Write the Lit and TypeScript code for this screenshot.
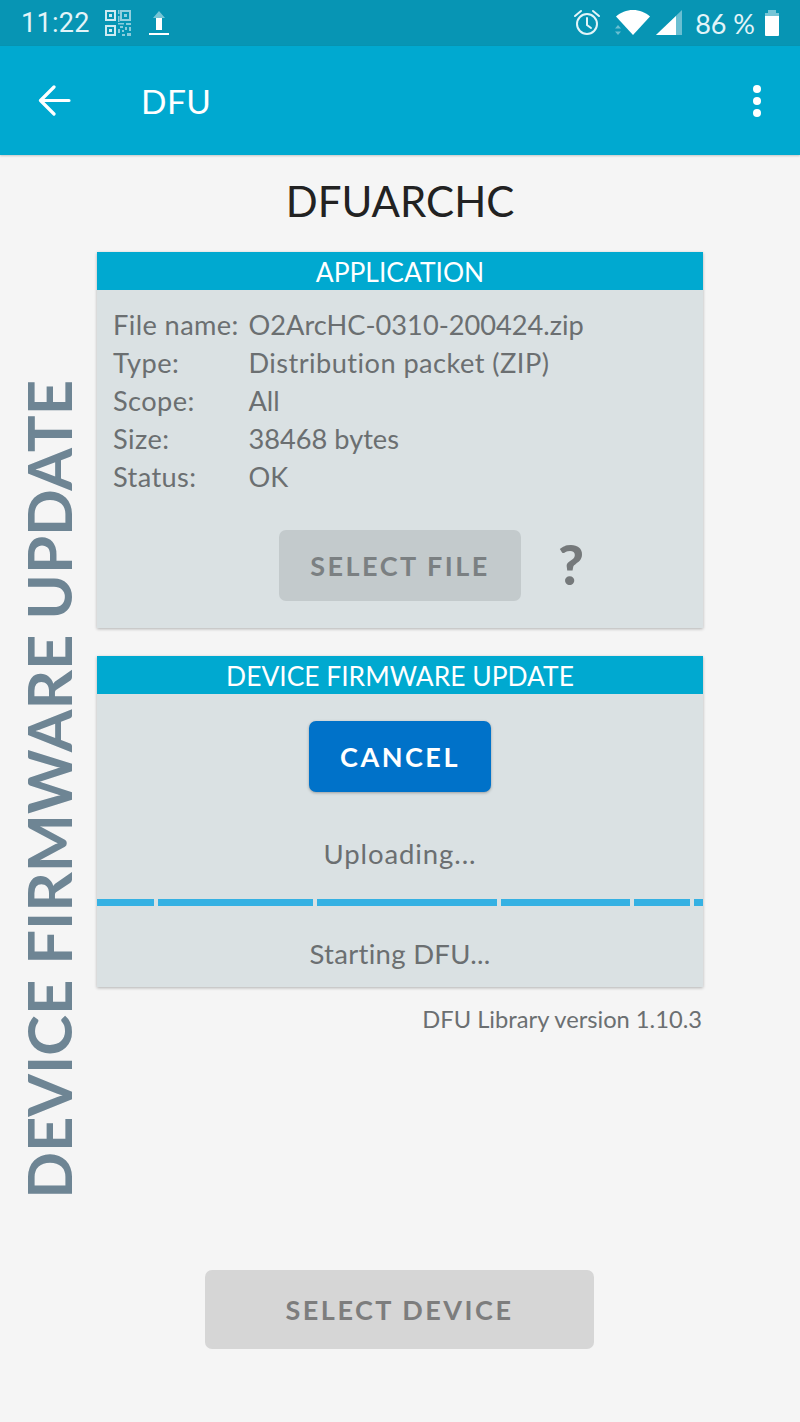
import { LitElement, html, css, svg } from "lit";
import { customElement } from "lit/decorators.js";

const qr = svg`<svg class="qr" width="28" height="28" viewBox="0 0 28 28" fill="#cfeaf1">
<path fill-rule="evenodd" d="M1 1h11v11H1zM3 3v7h7V3z"/><rect x="5" y="5" width="3" height="3"/>
<path fill-rule="evenodd" d="M1 16h11v11H1zM3 18v7h7v-7z"/><rect x="5" y="20" width="3" height="3"/>
<path opacity=".7" fill-rule="evenodd" d="M16 1h11v11H16zM18 3v7h7V3z"/><rect opacity=".7" x="20" y="5" width="3" height="3"/>
<path opacity=".65" d="M14 1h1.500v4H14zM14 7h1.500v6H14zM14 14h6v1.500h-6zM22 14h5v2h-5zM16 17h3v2h-3zM21 18h2v3h-2zM25 18h2v4h-2zM14 20h2v4h-2zM18 21h2v2h-2zM18 25h3v2h-3zM23 24h4v3h-4z"/>
</svg>`;
const upload = svg`<svg width="22" height="26" viewBox="0 0 22 26"><path d="M11 1l6 7h-3v3H8V8H5z" fill="#fff" opacity=".45"/><rect x="8" y="8" width="6" height="12" fill="#fff"/><rect x="1" y="23" width="20" height="2" fill="#fff"/></svg>`;
const alarm = svg`<svg width="28" height="28" viewBox="0 0 28 28" fill="none" stroke="#e3f4f8" stroke-width="2"><circle cx="14" cy="15" r="10"/><path d="M14 9v7l4 3M2 7l6-5M26 7l-6-5" stroke-linecap="round"/></svg>`;
const wifi = svg`<svg width="36" height="26" viewBox="0 0 36 26"><path d="M1 6.500C5.500 2.500 11.500 0 18 0s12.500 2.500 17 6.500L18 25z" fill="#fff"/></svg>`;
const arrows = svg`<svg class="arrows" width="6" height="10" viewBox="0 0 6 10" fill="#fff" opacity=".4"><path d="M3 0l3 3.500H0zM3 10L0 6.500h6z"/></svg>`;
const signal = svg`<svg width="26" height="26" viewBox="0 0 26 26"><path d="M0 25L26 0v25z" fill="#fff" opacity=".4"/><path d="M0 25L20 6v19z" fill="#fff"/></svg>`;
const battery = svg`<svg width="16" height="26" viewBox="0 0 16 26"><path d="M4 0h8v3H4z" fill="#fff" opacity=".45"/><path d="M1 3h14v3H1z" fill="#fff" opacity=".45"/><path d="M1 6h14v19a1 1 0 0 1-1 1H2a1 1 0 0 1-1-1z" fill="#fff"/></svg>`;
const back = svg`<svg width="34" height="32" viewBox="0 0 34 32" fill="none" stroke="#fff" stroke-width="3.200" stroke-linecap="round" stroke-linejoin="round"><path d="M31 15.500H3M16 2L2.500 15.500 16 29"/></svg>`;
const more = svg`<svg width="10" height="34" viewBox="0 0 10 34" fill="#fff"><circle cx="5" cy="5" r="4"/><circle cx="5" cy="17" r="4"/><circle cx="5" cy="29" r="4"/></svg>`;

@customElement("app-root")
export class AppRoot extends LitElement {
  static styles = css`
    :host { display: block; width: 800px; height: 1422px; background: #f5f5f5; font-family: Lato, "Noto Sans", sans-serif; font-variant-ligatures: none; color: #6b6f71; overflow: hidden; }
    .status { height: 46px; background: #0795b4; color: #e3f4f8; display: flex; align-items: center; padding: 0 20px 0 21px; box-sizing: border-box; }
    .time { font: 400 27px Roboto, sans-serif; letter-spacing: .3px; }
    .qr { margin-left: 14px; }
    .up { margin-left: 16px; display: flex; }
    .right { margin-left: auto; display: flex; align-items: center; }
    .right .w { margin-left: 14px; position: relative; display: flex; }
    .arrows { position: absolute; left: 0; top: 15px; }
    .right .s { margin-left: 5px; display: flex; }
    .pct { margin-left: 13px; font: 400 27px Lato, sans-serif; }
    .right .b { margin-left: 9px; display: flex; }
    .bar { height: 109px; background: #00a9d0; display: flex; align-items: center; padding: 0 38px; box-sizing: border-box; color: #fff; box-shadow: 0 1px 2px rgba(0,0,0,.2); position: relative; }
    .bar h1 { margin: 0 0 0 69px; font: 400 33.500px Lato, sans-serif; flex: 1; letter-spacing: .4px; }
    .main { display: grid; grid-template-columns: 97px 606px 97px; grid-template-rows: 97px 1fr; height: 1267px; }
    .title { grid-column: 1 / 4; grid-row: 1; margin: 0 0 6px; display: flex; align-items: center; justify-content: center; font: 400 42px Lato, sans-serif; color: #222; }
    .side { grid-column: 1; grid-row: 1 / 3; display: flex; justify-content: center; align-items: center; padding-top: 1px; }
    .side span { writing-mode: vertical-rl; transform: rotate(180deg); font: 700 61.500px Lato, sans-serif; color: #6e8594; white-space: nowrap; margin-right: 1px; }
    .col { grid-column: 2; grid-row: 2; display: flex; flex-direction: column; padding-bottom: 73px; }
    .card { background: #dae1e3; box-shadow: 0 1px 3px rgba(0,0,0,.28); }
    .card + .card { margin-top: 28px; }
    .head { background: #00a9d0; color: #fff; text-align: center; height: 38px; font: 400 26.400px/40px Lato, sans-serif; }
    .app { height: 376px; box-sizing: border-box; }
    .rows { padding: 15px 16px 0; display: grid; grid-template-columns: 135.500px 1fr; grid-auto-rows: 38px; align-items: center; font-size: 27.200px; }
    .rows .k { letter-spacing: .4px; }
    .rows .wide { letter-spacing: .45px; }
    .actions { display: flex; justify-content: center; margin-top: 35px; position: relative; }
    .btn { border-radius: 7px; font: 700 27px Lato, sans-serif; letter-spacing: 2.500px; display: flex; align-items: center; justify-content: center; }
    .sel { width: 242px; height: 71px; background: #c3cacc; color: #7b8082; }
    .q { position: absolute; left: 461px; top: 0; font: 900 56px Lato, sans-serif; color: #75797b; }
    .dfu { height: 331px; display: flex; flex-direction: column; align-items: center; }
    .head.wide { align-self: stretch; }
    .cancel { width: 182px; height: 71px; background: #0072c9; color: #fff; margin-top: 27px; box-shadow: 0 1px 3px rgba(0,0,0,.3); }
    .up-t { font-size: 27.500px; letter-spacing: .9px; margin-top: 43px; line-height: 38px; }
    .prog { align-self: stretch; display: flex; gap: 4px; height: 7px; margin-top: 26px; }
    .prog i { background: #35b1e3; display: block; }
    .start { font-size: 27.500px; letter-spacing: .3px; margin-top: 29px; line-height: 38px; }
    .ver { text-align: right; font-size: 23.700px; margin: 17px 1px 0 0; line-height: 30px; }
    .dev { width: 389px; height: 79px; background: #d6d6d6; color: #7d7d7d; margin-top: auto; margin-right: 1px; align-self: center; }
  `;

  render() {
    const segs = [57, 155, 180, 129, 56, 9];
    return html`
      <div class="status">
        <span class="time">11:22</span>
        ${qr}
        <span class="up">${upload}</span>
        <div class="right">
          ${alarm}
          <span class="w">${arrows}${wifi}</span>
          <span class="s">${signal}</span>
          <span class="pct">86 %</span>
          <span class="b">${battery}</span>
        </div>
      </div>
      <div class="bar">${back}<h1>DFU</h1>${more}</div>
      <div class="main">
        <h2 class="title">DFUARCHC</h2>
        <div class="side"><span>DEVICE FIRMWARE UPDATE</span></div>
        <div class="col">
          <section class="card app">
            <div class="head">APPLICATION</div>
            <div class="rows">
              <span class="k">File name:</span><span>O2ArcHC-0310-200424.zip</span>
              <span class="k">Type:</span><span class="wide">Distribution packet (ZIP)</span>
              <span class="k">Scope:</span><span>All</span>
              <span class="k">Size:</span><span>38468 bytes</span>
              <span class="k">Status:</span><span>OK</span>
            </div>
            <div class="actions">
              <div class="btn sel">SELECT FILE</div>
              <span class="q">?</span>
            </div>
          </section>
          <section class="card dfu">
            <div class="head wide">DEVICE FIRMWARE UPDATE</div>
            <div class="btn cancel">CANCEL</div>
            <div class="up-t">Uploading...</div>
            <div class="prog">${segs.map((w) => html`<i style="width:${w}px"></i>`)}</div>
            <div class="start">Starting DFU...</div>
          </section>
          <div class="ver">DFU Library version 1.10.3</div>
          <div class="btn dev">SELECT DEVICE</div>
        </div>
      </div>
    `;
  }
}
